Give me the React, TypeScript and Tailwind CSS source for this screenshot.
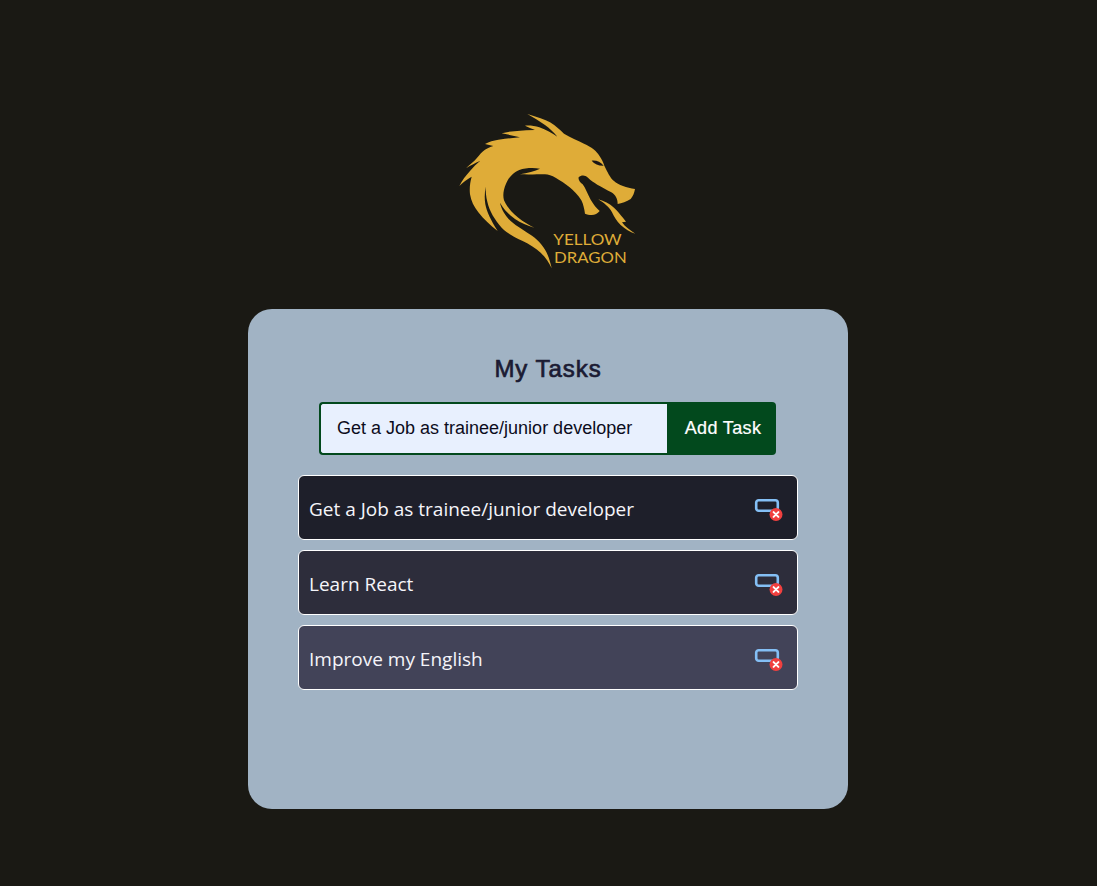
function Dragon() {
  return (
    <svg viewBox="0 0 585 510" className="w-[195px] h-[170px] block mr-px">
      <defs>
        <filter id="soft" x="-5%" y="-5%" width="110%" height="110%">
          <feGaussianBlur stdDeviation="1.8" />
        </filter>
      </defs>
      <g filter="url(#soft)" fill="#dfac38">
        <path d="M232 27 C262 36 285 44 300 52 C318 62 330 76 342 86 C362 98 382 106 402 116 C425 126 440 138 448 152 C455 162 460 172 463 182 C472 200 480 218 492 228 C505 240 530 248 555 252 C553 264 549 274 542 282 C530 290 515 295 503 297 C503 282 497 270 484 262 C470 255 455 246 442 239 C432 232 422 226 414 218 C405 209 393 210 386 217 C384 224 390 232 398 238 C407 250 413 268 422 284 C430 298 440 310 449 318 C442 326 435 330 425 330 C418 330 410 328 405 326 C403 312 400 298 394 286 C385 270 370 256 358 246 C345 236 330 226 318 219 C305 212 295 208 285 208 C262 208 235 209 210 208 C232 204 255 198 270 191 C250 188 225 189 208 195 C190 202 176 218 168 236 C160 254 158 272 162 286 C170 305 185 322 205 338 C220 350 238 360 253 368 C232 362 212 354 195 342 C176 328 160 312 150 293 C154 312 165 332 182 348 C200 364 225 378 246 392 C268 408 285 428 293 450 C298 462 302 476 305 490 C298 474 288 458 272 443 C258 430 238 418 218 408 C195 398 172 385 155 368 C135 345 118 318 112 290 C108 275 107 260 107 245 C104 262 103 280 106 298 C110 320 122 345 143 378 C122 362 100 342 85 322 C72 305 63 288 60 268 C58 250 60 232 65 215 C52 222 38 232 28 243 C36 226 48 212 60 198 C70 187 80 176 90 168 C76 174 60 182 48 190 C60 178 72 170 80 160 C88 150 96 140 105 134 C112 130 120 126 130 123 C122 121 113 119 105 117 C118 110 130 106 145 104 C165 101 188 99 210 97 C192 92 172 88 155 85 C172 80 186 79 202 78 C220 76 238 75 255 75 C245 71 235 66 225 62 C240 61 255 63 268 67 C288 74 306 84 322 95 C312 82 298 70 285 60 C268 48 250 37 232 27 Z" />
        <path d="M445 283 C462 288 478 296 492 308 C503 318 510 328 520 340 L528 350 L516 352 C525 365 540 376 556 386 C540 381 525 372 512 360 C500 349 492 335 486 322 C478 306 462 294 445 283 Z" />
      </g>
      <g filter="url(#soft)" fill="#1a1914">
        <path d="M425 167 C438 165 452 171 461 182 C448 183 434 178 425 167 Z" />
      </g>
      <g fill="#dfac38" fontFamily="'Lato', 'Noto Sans', sans-serif" fontSize="46">
        <text x="310" y="420" textLength="205" lengthAdjust="spacingAndGlyphs">YELLOW</text>
        <text x="312" y="473" textLength="218" lengthAdjust="spacingAndGlyphs">DRAGON</text>
      </g>
    </svg>
  );
}

function RemoveIcon() {
  return (
    <svg viewBox="0 0 30 30" className="w-[30px] h-[30px] block relative top-[5px]">
      <rect x="2.2" y="2.2" width="21.6" height="10.6" rx="2.5" fill="none" stroke="#84bff5" strokeWidth="2.6" />
      <circle cx="22" cy="16.5" r="6.5" fill="#f1403f" />
      <path d="M19.6 14.1 L24.4 18.9 M24.4 14.1 L19.6 18.9" stroke="#ffffff" strokeWidth="2" strokeLinecap="round" />
    </svg>
  );
}

const tasks = [
  { text: "Get a Job as trainee/junior developer", bg: "bg-[#1e1f2a]" },
  { text: "Learn React", bg: "bg-[#2d2d3b]" },
  { text: "Improve my English", bg: "bg-[#424358]" },
];

export default function App() {
  return (
    <div className="min-h-[886px] bg-[#1a1914] flex flex-col items-center pt-[105px] pr-px font-['Liberation_Sans',Arial,sans-serif]">
      <Dragon />
      <main className="mt-[34px] w-[600px] h-[500px] bg-[#a1b3c4] rounded-[24px] flex flex-col items-center pt-[44px]">
        <h1 className="text-[24px] leading-[32px] font-normal tracking-[0.95px] text-[#1b1b33] [-webkit-text-stroke:0.7px_#1b1b33]">My Tasks</h1>
        <form className="mt-[17px] mr-px flex w-[457px] h-[53px]">
          <input
            readOnly
            value="Get a Job as trainee/junior developer"
            className="w-[348px] h-full border-2 border-[#02491d] border-r-0 rounded-l-[4px] bg-[#e8f0fe] pl-[16px] text-[18px] text-[#0c0c1c] outline-none"
          />
          <button type="button" className="flex-1 h-full pl-[3px] bg-[#02491d] rounded-r-[4px] text-white text-[18px] tracking-[0.35px] [-webkit-text-stroke:0.2px_#ffffff]">
            Add Task
          </button>
        </form>
        <ul className="mt-[20px] w-[500px] flex flex-col gap-[10px]">
          {tasks.map((t) => (
            <li key={t.text} className={`h-[65px] ${t.bg} border border-white rounded-[6px] flex items-center justify-between pl-[10px] pr-[13px]`}>
              <span className="text-[19px] text-[#f5f5fa] font-['Open_Sans','Noto_Sans',sans-serif] relative top-[2px]">{t.text}</span>
              <RemoveIcon />
            </li>
          ))}
        </ul>
      </main>
    </div>
  );
}
